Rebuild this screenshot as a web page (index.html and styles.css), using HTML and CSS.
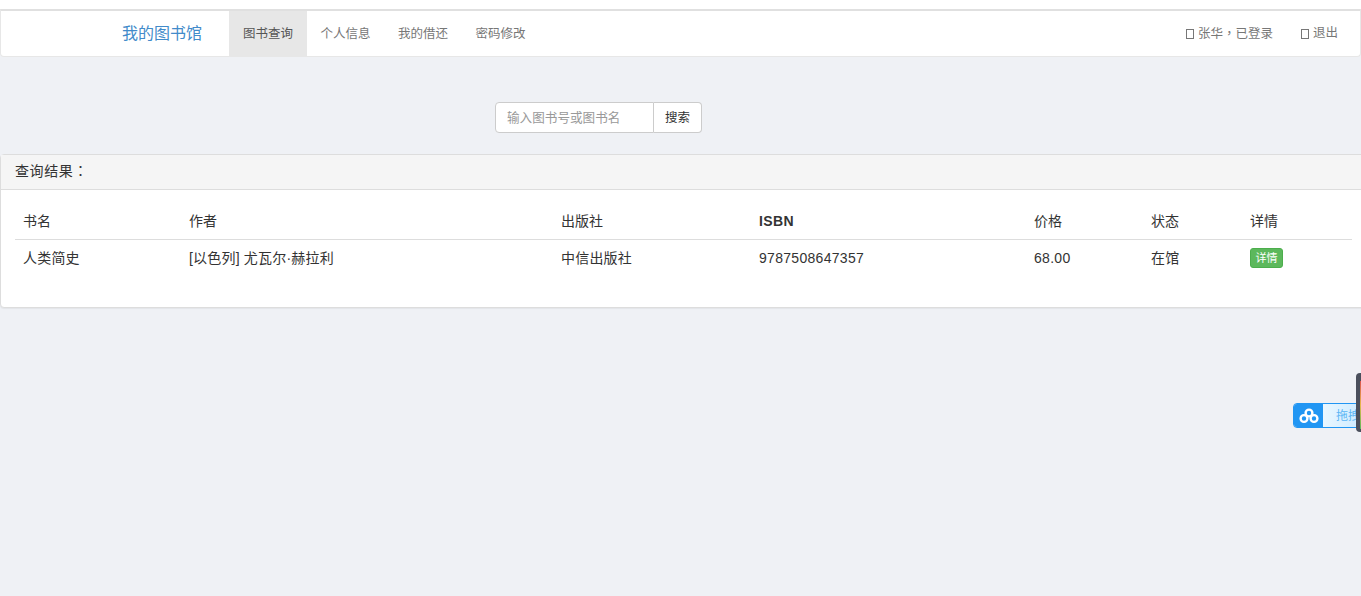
FILE: index.html
```html
<!DOCTYPE html>
<html lang="zh-CN">
<head>
<meta charset="utf-8">
<title>我的图书馆</title>
<link rel="stylesheet" href="styles.css">
</head>
<body>
<nav class="navbar">
  <a class="brand" href="#">我的图书馆</a>
  <ul class="nav">
    <li class="nav-item active">图书查询</li>
    <li class="nav-item">个人信息</li>
    <li class="nav-item">我的借还</li>
    <li class="nav-item">密码修改</li>
  </ul>
  <ul class="nav nav-right">
    <li class="nav-item user"><span class="tofu"></span><span>张华<span class="punct" lang="zh-TW">，</span>已登录</span></li>
    <li class="nav-item logout"><span class="tofu"></span><span>退出</span></li>
  </ul>
</nav>
<form class="search">
  <input class="search-input" type="text" placeholder="输入图书号或图书名">
  <button class="search-btn" type="button">搜索</button>
</form>
<section class="panel">
  <div class="panel-heading">查询结果<span class="punct" lang="zh-TW">：</span></div>
  <div class="panel-body">
    <table class="table">
      <colgroup>
        <col class="c1"><col class="c2"><col class="c3"><col class="c4"><col class="c5"><col class="c6"><col class="c7">
      </colgroup>
      <thead>
        <tr><th>书名</th><th>作者</th><th>出版社</th><th class="latin">ISBN</th><th>价格</th><th>状态</th><th>详情</th></tr>
      </thead>
      <tbody>
        <tr><td>人类简史</td><td>[以色列] 尤瓦尔·赫拉利</td><td>中信出版社</td><td class="num">9787508647357</td><td class="num">68.00</td><td>在馆</td><td><button class="detail-btn" type="button">详情</button></td></tr>
      </tbody>
    </table>
  </div>
</section>
<div class="widget">
  <span class="widget-logo">
    <svg width="20" height="16" viewBox="0 0 20 16"><g fill="none" stroke="#fff" stroke-width="2.4"><circle cx="10" cy="5" r="3.4"/><circle cx="5" cy="10.5" r="3.4"/><circle cx="15" cy="10.5" r="3.4"/></g></svg>
  </span>
  <span class="widget-text">拖拽</span>
</div>
<div class="side-tab"><span class="side-stripes"></span></div>
</body>
</html>
```
FILE: styles.css
```css
* { box-sizing: border-box; }
html, body { margin: 0; height: 100%; overflow: hidden; }
body {
  position: relative;
  background: #eff1f5;
  color: #333;
  font-family: "Liberation Sans", "Noto Sans CJK SC", sans-serif;
  font-size: 14px;
  line-height: 20px;
  padding-top: 9px;
  background-image: linear-gradient(#fff, #fff);
  background-repeat: no-repeat;
  background-size: 100% 9px;
}
.punct { font-family: "Noto Sans CJK TC", sans-serif; }
.navbar {
  display: flex;
  height: 48px;
  background: #fff;
  border: 1px solid #e7e7e7;
  border-top: 2px solid #e0e0e0;
  border-radius: 0 0 4px 4px;
  padding-left: 121px;
  align-items: stretch;
}
.brand {
  width: 107px;
  font-size: 16px;
  line-height: 46px;
  color: #428bca;
  text-decoration: none;
}
.nav { display: flex; margin: 0; padding: 0; list-style: none; }
.nav-right { margin-left: auto; margin-right: 8px; }
.nav-item {
  font-size: 12.5px;
  line-height: 47px;
  height: 45px;
  color: #777;
  padding: 0 14px;
  width: 77.5px;
  white-space: nowrap;
}
.nav-item.active { background: #e7e7e7; color: #555; }
.nav-item.user, .nav-item.logout { width: auto; display: flex; align-items: center; line-height: 45px; }
.tofu {
  width: 8px;
  height: 10px;
  border: 1px solid #777;
  margin-right: 4px;
}
.search {
  display: flex;
  width: 207px;
  height: 31px;
  margin: 45px 0 21px 495px;
}
.search-input {
  width: 159px;
  height: 31px;
  padding: 0 11px;
  font: 12.6px "Liberation Sans", "Noto Sans CJK SC", sans-serif;
  color: #555;
  background: #fff;
  border: 1px solid #ccc;
  border-radius: 4px 0 0 4px;
  outline: none;
}
.search-input::placeholder { color: #999; opacity: 1; }
.search-btn {
  flex: 1;
  height: 31px;
  padding: 0 0 2px;
  font: 12.5px "Liberation Sans", "Noto Sans CJK SC", sans-serif;
  color: #333;
  background: #fff;
  border: 1px solid #ccc;
  border-left: 0;
  border-radius: 0 4px 4px 0;
}
.panel {
  width: 1400px;
  height: 154px;
  background: #fff;
  border: 1px solid #ddd;
  border-radius: 4px;
  box-shadow: 0 1px 1px rgba(0, 0, 0, .05);
}
.panel-heading {
  height: 35px;
  padding: 5px 14px;
  font-size: 14px;
  letter-spacing: .6px;
  background: #f5f5f5;
  border-bottom: 1px solid #ddd;
}
.panel-body { padding: 13px 0 0 14px; }
.table { width: 1337px; table-layout: fixed; border-collapse: collapse; }
.c1 { width: 166px; }
.c2 { width: 372px; }
.c3 { width: 198px; }
.c4 { width: 275px; }
.c5 { width: 117px; }
.c6 { width: 99px; }
.c7 { width: 110px; }
th, td { text-align: left; padding: 8px; font-size: 14px; line-height: 20px; color: #333; }
th { border-bottom: 1px solid #ddd; font-weight: 400; height: 36px; }
th.latin { font-weight: 700; letter-spacing: .4px; }
td { height: 37px; letter-spacing: .2px; }
td.num { letter-spacing: .3px; }
.detail-btn {
  display: block;
  width: 33px;
  height: 20px;
  padding: 0;
  font: 11px/18px "Liberation Sans", "Noto Sans CJK SC", sans-serif;
  color: #fff;
  background: #5cb85c;
  border: 1px solid #4cae4c;
  border-radius: 3px;
}
.widget {
  position: absolute;
  left: 1293px;
  top: 403px;
  width: 80px;
  height: 25px;
  display: flex;
  border: 1px solid #2196f3;
  border-radius: 4px 0 0 4px;
  overflow: hidden;
}
.widget-logo {
  width: 29px;
  background: #2196f3;
  display: flex;
  align-items: center;
  justify-content: center;
}
.widget-text {
  flex: 1;
  padding-left: 13px;
  font-size: 12px;
  line-height: 24px;
  color: #5bb5f5;
  background: linear-gradient(90deg, #eaf7ff, #c4e7ff);
  white-space: nowrap;
}
.side-tab {
  position: absolute;
  left: 1356px;
  top: 373px;
  width: 20px;
  height: 59px;
  background: #4a4f5c;
  border-radius: 4px 0 0 4px;
  padding: 8px 0 0 4px;
}
.side-stripes {
  display: block;
  width: 1px;
  height: 48px;
  background: linear-gradient(#d9534f, #e7b84b, #5cb85c);
}
```
